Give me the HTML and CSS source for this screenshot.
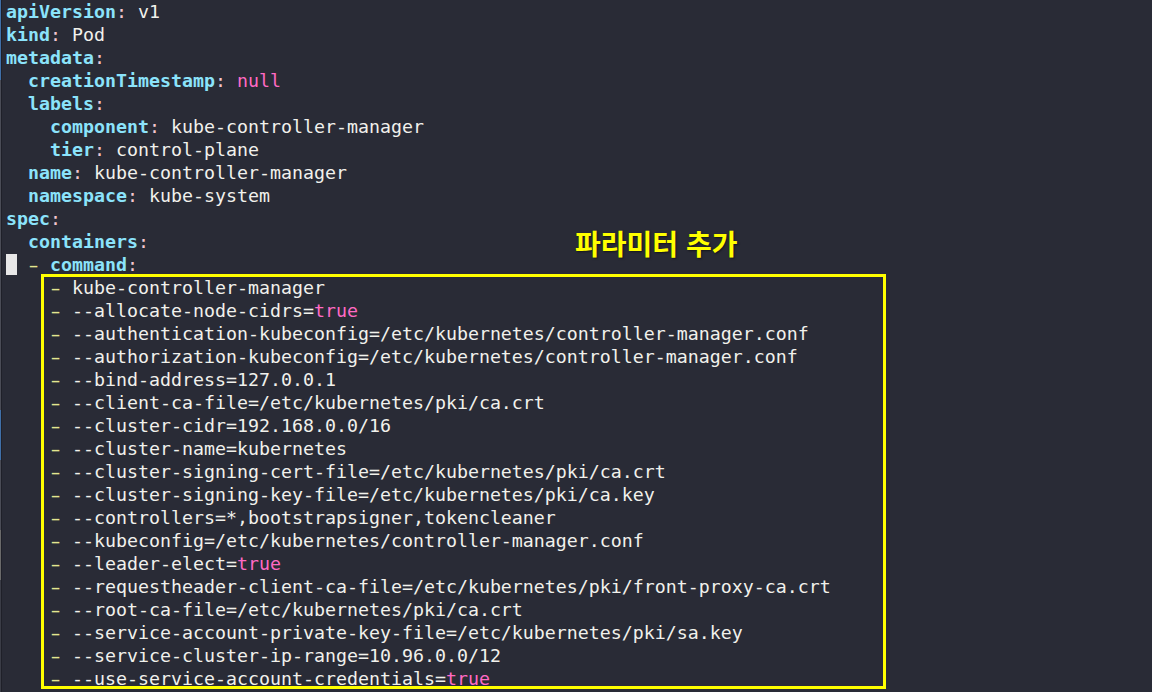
FILE: index.html
```html
<!DOCTYPE html>
<html lang="ko">
<head>
<meta charset="utf-8">
<link rel="stylesheet" href="styles.css">
</head>
<body>
<div class="term">
<div class="edge"></div>
<pre class="code"><span class="k">apiVersion</span><span class="c">:</span> v1
<span class="k">kind</span><span class="c">:</span> Pod
<span class="k">metadata</span><span class="c">:</span>
  <span class="k">creationTimestamp</span><span class="c">:</span> <span class="p">null</span>
  <span class="k">labels</span><span class="c">:</span>
    <span class="k">component</span><span class="c">:</span> kube-controller-manager
    <span class="k">tier</span><span class="c">:</span> control-plane
  <span class="k">name</span><span class="c">:</span> kube-controller-manager
  <span class="k">namespace</span><span class="c">:</span> kube-system
<span class="k">spec</span><span class="c">:</span>
  <span class="k">containers</span><span class="c">:</span>
<span class="cur"> </span> <span class="d">-</span> <span class="k">command</span><span class="c">:</span>
    <span class="d">-</span> kube-controller-manager
    <span class="d">-</span> --allocate-node-cidrs=<span class="p">true</span>
    <span class="d">-</span> --authentication-kubeconfig=/etc/kubernetes/controller-manager.conf
    <span class="d">-</span> --authorization-kubeconfig=/etc/kubernetes/controller-manager.conf
    <span class="d">-</span> --bind-address=127.0.0.1
    <span class="d">-</span> --client-ca-file=/etc/kubernetes/pki/ca.crt
    <span class="d">-</span> --cluster-cidr=192.168.0.0/16
    <span class="d">-</span> --cluster-name=kubernetes
    <span class="d">-</span> --cluster-signing-cert-file=/etc/kubernetes/pki/ca.crt
    <span class="d">-</span> --cluster-signing-key-file=/etc/kubernetes/pki/ca.key
    <span class="d">-</span> --controllers=*,bootstrapsigner,tokencleaner
    <span class="d">-</span> --kubeconfig=/etc/kubernetes/controller-manager.conf
    <span class="d">-</span> --leader-elect=<span class="p">true</span>
    <span class="d">-</span> --requestheader-client-ca-file=/etc/kubernetes/pki/front-proxy-ca.crt
    <span class="d">-</span> --root-ca-file=/etc/kubernetes/pki/ca.crt
    <span class="d">-</span> --service-account-private-key-file=/etc/kubernetes/pki/sa.key
    <span class="d">-</span> --service-cluster-ip-range=10.96.0.0/12
    <span class="d">-</span> --use-service-account-credentials=<span class="p">true</span></pre>
<div class="label">파라미터 추가</div>
<div class="box"></div>
</div>
</body>
</html>
```

FILE: styles.css
```css
html, body {
  margin: 0;
  padding: 0;
  background: #292b36;
  width: 1152px;
  height: 692px;
  overflow: hidden;
}

.term {
  position: relative;
  display: flex;
  width: 1152px;
  height: 692px;
  background: #292b36;
}

.edge {
  width: 1px;
  flex: none;
  background: linear-gradient(to bottom, #3f6fa8 0, #3f6fa8 80px, #4a4c56 80px, #4a4c56 410px, #3f6fa8 410px, #3f6fa8 460px, #4a4c56 460px, #4a4c56 530px, #6a6a6a 530px, #6a6a6a 580px, #3a3c46 580px);
  border-right: 1px solid #1f2029;
}

.code {
  margin: 0;
  padding: 0 0 0 4px;
  font-family: "DejaVu Sans Mono", "Liberation Mono", monospace;
  font-size: 18.27px;
  line-height: 23px;
  color: #f1f1ec;
  white-space: pre;
}

.k {
  color: #8be3fb;
  font-weight: bold;
}

.c {
  color: #f4c6d0;
}

.p {
  color: #ff6ac4;
}

.d {
  display: inline-block;
  color: #e3e68f;
  transform: scaleX(1.6);
}

.cur {
  background: #e8e8e8;
}

.label {
  position: absolute;
  left: 575px;
  top: 223px;
  font-family: "Noto Sans CJK KR", "Noto Sans", sans-serif;
  font-size: 28px;
  font-weight: bold;
  line-height: 40px;
  color: #ffff00;
  text-shadow: 1px 1px 2px rgba(0, 0, 0, 0.5);
}

.box {
  position: absolute;
  left: 41px;
  top: 274px;
  width: 839px;
  height: 409px;
  border: 3px solid #ffff00;
}
```
